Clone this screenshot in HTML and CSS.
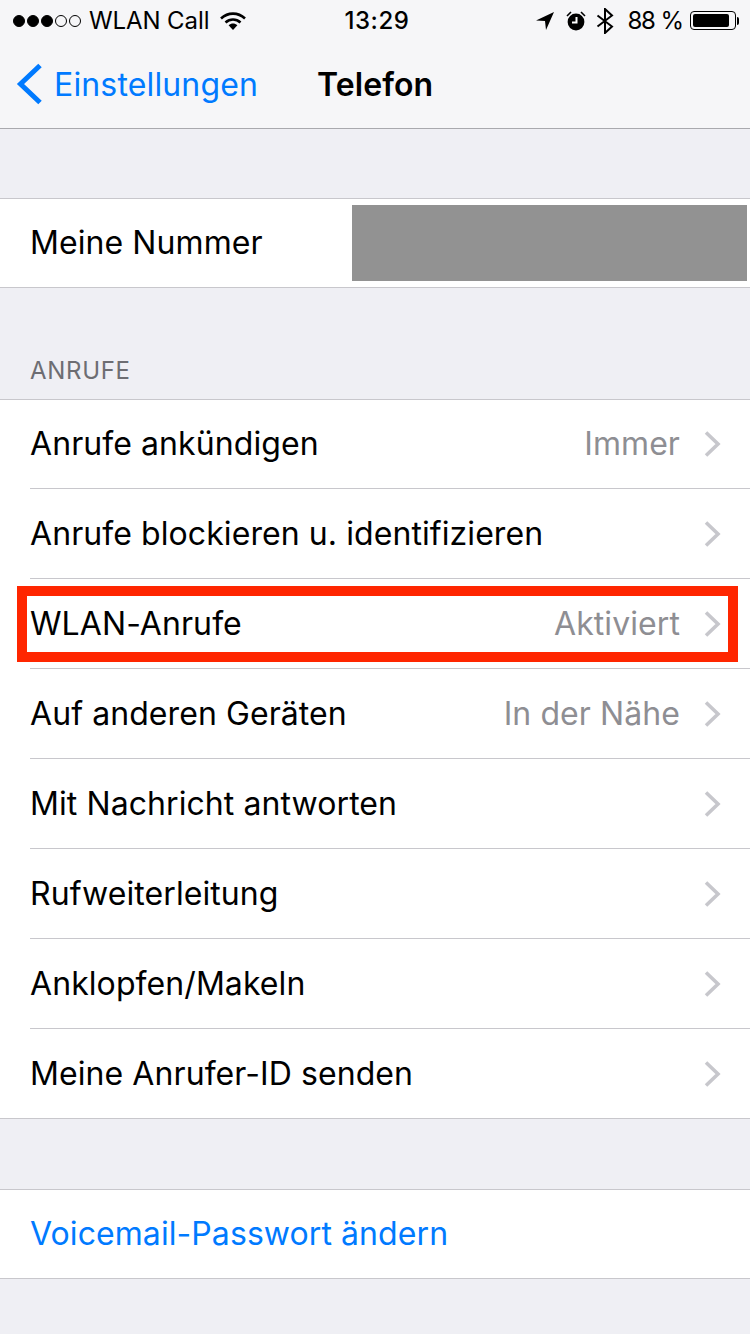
FILE: index.html
```html
<!DOCTYPE html>
<html lang="de">
<head>
    <meta charset="UTF-8">
    <meta name="viewport" content="width=device-width, initial-scale=1.0">
    <title>Telefon</title>
    <link rel="stylesheet" href="styles.css">
</head>
<body>
    <header class="top">
        <div class="status">
            <div class="status-left">
                <span class="signal"><i class="on"></i><i class="on"></i><i class="on"></i><i></i><i></i></span>
                <span class="carrier">WLAN Call</span>
                <svg class="wifi" width="26" height="20" viewBox="0 0 26 20">
                    <path d="M1 7.5C8 1 18 1 25 7.5" fill="none" stroke="#000" stroke-width="2.6"/>
                    <path d="M5.5 11.5C10 7.5 16 7.5 20.5 11.5" fill="none" stroke="#000" stroke-width="2.6"/>
                    <path d="M8.6 14.2C11.4 11.8 14.6 11.8 17.4 14.2L13 19Z" fill="#000"/>
                </svg>
            </div>
            <div class="status-time">13:29</div>
            <div class="status-right">
                <svg width="18" height="18" viewBox="0 0 18 18"><path d="M0 8.5L18 0L10 18L9 9Z" fill="#000"/></svg>
                <svg class="alarm" width="22" height="22" viewBox="0 0 22 22">
                    <circle cx="11" cy="12" r="8.4" fill="#000"/>
                    <path d="M11.5 7V12.5H7" fill="none" stroke="#fff" stroke-width="2"/>
                    <path d="M2 6L6 2M20 6L16 2" stroke="#000" stroke-width="1.6"/>
                </svg>
                <svg class="bt" width="18" height="26" viewBox="0 0 18 26">
                    <path d="M1.5 7.5L16 18.5L9 25V1L16 7.5L1.5 18.5" fill="none" stroke="#000" stroke-width="2"/>
                </svg>
                <span class="percent">88 %</span>
                <span class="battery"><span class="battery-fill"></span></span>
                <span class="battery-tip"></span>
            </div>
        </div>
        <nav class="navbar">
            <a class="back">
                <svg width="28" height="42" viewBox="0 0 28 42"><path d="M26 2.5L6.5 21L26 39.5" fill="none" stroke="#007aff" stroke-width="5"/></svg>
                <span>Einstellungen</span>
            </a>
            <div class="title">Telefon</div>
        </nav>
    </header>

    <section class="group first">
        <div class="row number-row">
            <span class="label">Meine Nummer</span>
            <div class="redacted"></div>
        </div>
    </section>

    <div class="section-title">ANRUFE</div>

    <section class="group">
        <div class="row"><span class="label">Anrufe ankündigen</span><span class="value">Immer</span><svg class="chev" width="18" height="28" viewBox="0 0 18 28"><path d="M2 2.5L14 14L2 25.5" fill="none" stroke="#c7c7cc" stroke-width="3.6"/></svg></div>
        <div class="row"><span class="label">Anrufe blockieren u. identifizieren</span><svg class="chev" width="18" height="28" viewBox="0 0 18 28"><path d="M2 2.5L14 14L2 25.5" fill="none" stroke="#c7c7cc" stroke-width="3.6"/></svg></div>
        <div class="row marked"><span class="label">WLAN-Anrufe</span><span class="value">Aktiviert</span><svg class="chev" width="18" height="28" viewBox="0 0 18 28"><path d="M2 2.5L14 14L2 25.5" fill="none" stroke="#c7c7cc" stroke-width="3.6"/></svg></div>
        <div class="row"><span class="label">Auf anderen Geräten</span><span class="value">In der Nähe</span><svg class="chev" width="18" height="28" viewBox="0 0 18 28"><path d="M2 2.5L14 14L2 25.5" fill="none" stroke="#c7c7cc" stroke-width="3.6"/></svg></div>
        <div class="row"><span class="label">Mit Nachricht antworten</span><svg class="chev" width="18" height="28" viewBox="0 0 18 28"><path d="M2 2.5L14 14L2 25.5" fill="none" stroke="#c7c7cc" stroke-width="3.6"/></svg></div>
        <div class="row"><span class="label">Rufweiterleitung</span><svg class="chev" width="18" height="28" viewBox="0 0 18 28"><path d="M2 2.5L14 14L2 25.5" fill="none" stroke="#c7c7cc" stroke-width="3.6"/></svg></div>
        <div class="row"><span class="label">Anklopfen/Makeln</span><svg class="chev" width="18" height="28" viewBox="0 0 18 28"><path d="M2 2.5L14 14L2 25.5" fill="none" stroke="#c7c7cc" stroke-width="3.6"/></svg></div>
        <div class="row"><span class="label">Meine Anrufer-ID senden</span><svg class="chev" width="18" height="28" viewBox="0 0 18 28"><path d="M2 2.5L14 14L2 25.5" fill="none" stroke="#c7c7cc" stroke-width="3.6"/></svg></div>
    </section>

    <section class="group last">
        <div class="row"><span class="label link">Voicemail-Passwort ändern</span></div>
    </section>
</body>
</html>
```

FILE: styles.css
```css
html, body {
    margin: 0;
    padding: 0;
}

body {
    width: 750px;
    height: 1334px;
    overflow: hidden;
    background: #efeff4;
    font-family: Inter, "Liberation Sans", sans-serif;
    color: #000;
}

.top {
    height: 128px;
    background: #f6f6f8;
    border-bottom: 1px solid #a9a9ae;
}

.status {
    height: 40px;
    display: grid;
    grid-template-columns: 1fr auto 1fr;
    align-items: center;
    font-size: 24px;
    padding: 1px 0 0 4px;
    box-sizing: border-box;
}

.status-left {
    display: flex;
    align-items: center;
    padding-left: 9px;
}

.signal {
    display: flex;
    gap: 2px;
    margin-right: 8px;
}

.signal i {
    width: 10px;
    height: 10px;
    border: 1px solid #000;
    border-radius: 50%;
}

.signal i.on {
    background: #000;
}

.carrier {
    letter-spacing: -0.1px;
}

.wifi {
    margin-left: 11px;
}

.status-time {
    font-weight: 500;
    font-size: 24px;
    letter-spacing: 0.6px;
}

.status-right {
    display: flex;
    align-items: center;
    justify-content: flex-end;
    padding-right: 11px;
}

.alarm {
    margin-left: 11px;
}

.bt {
    margin-left: 9px;
}

.percent {
    margin-left: 13px;
    margin-right: 7px;
    letter-spacing: -1.1px;
}

.battery {
    width: 40px;
    height: 13px;
    padding: 2px;
    border: 1px solid #000;
    border-radius: 4px;
    display: block;
}

.battery-fill {
    display: block;
    width: 90%;
    height: 100%;
    background: #000;
    border-radius: 2px;
}

.battery-tip {
    width: 2px;
    height: 8px;
    background: #000;
    margin-left: 1px;
    border-radius: 0 2px 2px 0;
}

.navbar {
    height: 88px;
    display: flex;
    align-items: center;
    font-size: 32px;
}

.back {
    display: flex;
    align-items: center;
    color: #007aff;
    padding-left: 14px;
    gap: 12px;
    width: 317px;
    box-sizing: border-box;
    letter-spacing: 0.15px;
}

.title {
    font-weight: 600;
    letter-spacing: 0.1px;
}

.group {
    background: #fff;
    border-top: 1px solid #c8c7cc;
    border-bottom: 1px solid #c8c7cc;
}

.group.first {
    margin-top: 69px;
}

.group.last {
    margin-top: 70px;
}

.section-title {
    height: 111px;
    box-sizing: border-box;
    padding: 69px 0 0 30px;
    font-size: 24px;
    line-height: 28px;
    color: #6d6d72;
    letter-spacing: 0.7px;
}

.row {
    position: relative;
    height: 89px;
    display: flex;
    align-items: center;
    padding: 0 28px 0 30px;
    font-size: 32px;
    letter-spacing: 0.08px;
}

.row:first-child {
    height: 88px;
}

.row:first-child .label,
.row:first-child .value {
    margin-bottom: 2px;
}

.row + .row::before {
    content: "";
    position: absolute;
    left: 30px;
    right: 0;
    top: -1px;
    height: 1px;
    background: #c8c7cc;
}

.row + .row {
    margin-top: 1px;
}

.label {
    flex: 1;
}

.link {
    color: #007aff;
}

.value {
    color: #8e8e93;
    margin-right: 24px;
}

.number-row {
    padding-right: 3px;
}

.redacted {
    width: 395px;
    height: 76px;
    background: #929292;
}

/* red annotation drawn over the row */
.marked::after {
    content: "";
    position: absolute;
    left: 17px;
    top: 7px;
    width: 721px;
    height: 76px;
    box-sizing: border-box;
    border: 10px solid #ff2600;
}
```
